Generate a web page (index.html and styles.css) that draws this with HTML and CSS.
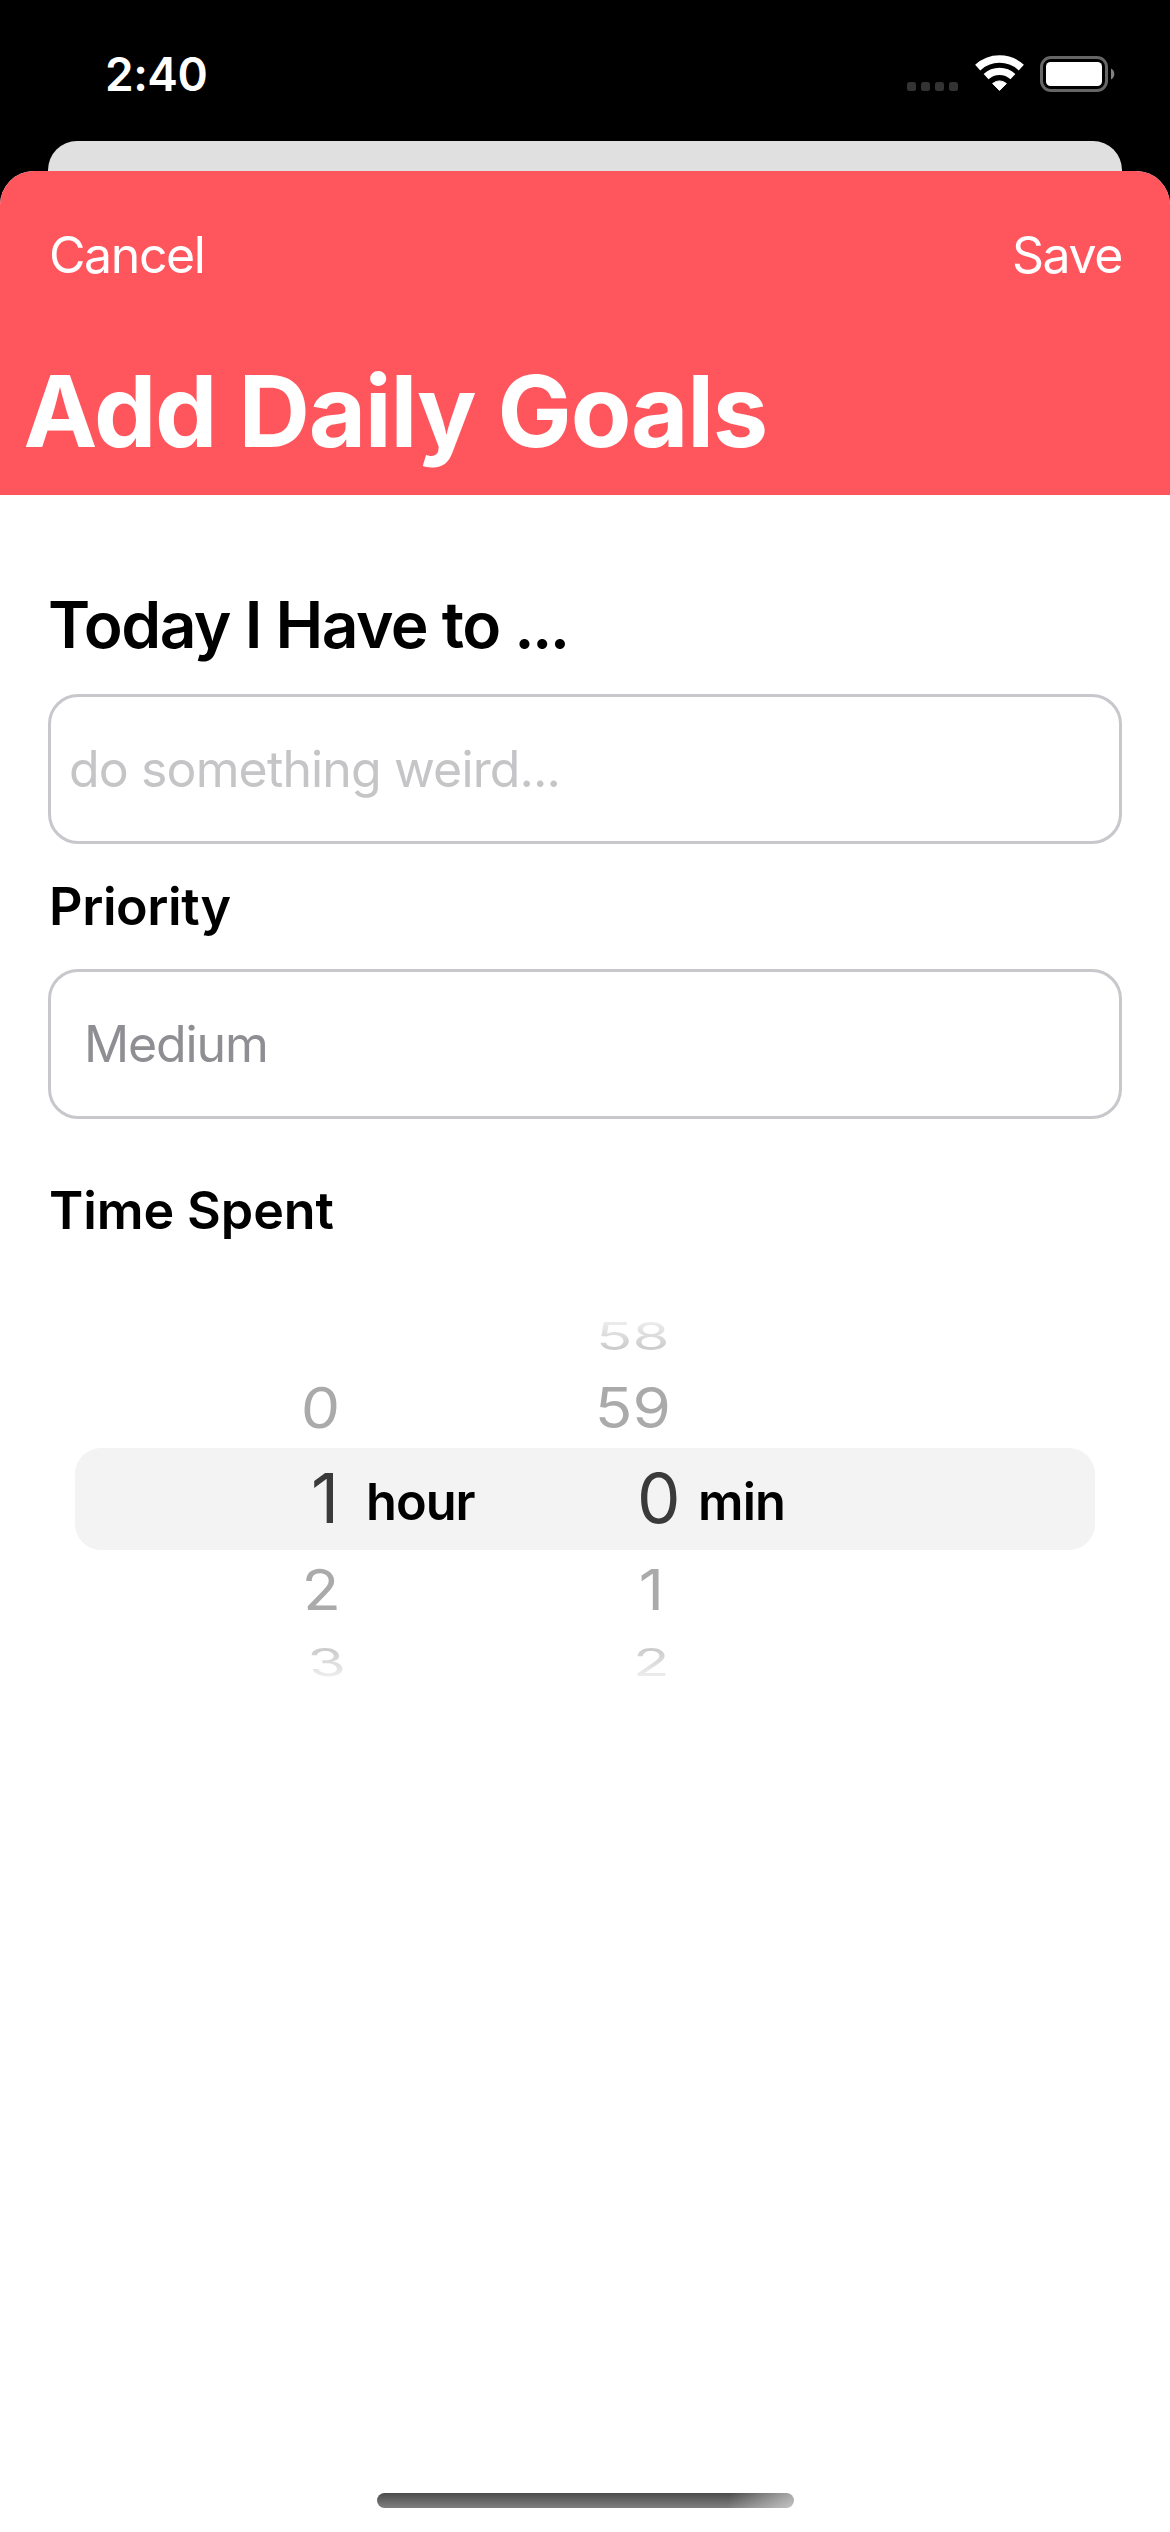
FILE: index.html
```
<!DOCTYPE html>
<html lang="en">
<head>
<meta charset="utf-8">
<title>Add Daily Goals</title>
<link rel="stylesheet" href="styles.css">
</head>
<body>
<div class="screen">
  <header class="status">
    <span class="clock">2:40</span>
    <div class="indicators">
      <svg class="signal" width="51" height="9" viewBox="0 0 51 9">
        <rect width="9" height="9" rx="2.5"/><rect x="14" width="9" height="9" rx="2.5"/><rect x="28" width="9" height="9" rx="2.5"/><rect x="42" width="9" height="9" rx="2.5"/>
      </svg>
      <svg class="wifi" width="49" height="36" viewBox="0 0 49 36">
        <path class="arc" d="M2.7 12.6A32 32 0 0 1 46.3 12.6" stroke-width="7.6"/>
        <path class="arc" d="M11.1 21.6A19.7 19.7 0 0 1 37.9 21.6" stroke-width="7.2"/>
        <path class="dot" d="M24.5 35.4L17.6 28.5Q24.5 23.3 31.4 28.5Z"/>
      </svg>
      <svg class="battery" width="76" height="36" viewBox="0 0 76 36">
        <rect class="shell" x="1.5" y="1.5" width="65" height="33" rx="9.5"/>
        <rect class="charge" x="6" y="6" width="56" height="24" rx="4.5"/>
        <path class="nub" d="M71 12.5A6.2 6.2 0 0 1 71 23.5Z"/>
      </svg>
    </div>
  </header>
  <div class="back-card"></div>
  <main class="sheet">
    <div class="header">
      <nav class="nav"><span class="action">Cancel</span><span class="action">Save</span></nav>
      <h1 class="title">Add Daily Goals</h1>
    </div>
    <section class="form">
      <h2 class="question">Today I Have to <span class="dots">...</span></h2>
      <div class="field placeholder">do something weird...</div>
      <h3 class="label priority">Priority</h3>
      <div class="field value">Medium</div>
      <h3 class="label time">Time Spent</h3>
      <div class="picker">
        <div class="band"></div>
        <div class="wheel hours">
          <span></span>
          <span class="near above">0</span>
          <span class="current">1</span>
          <span class="near below">2</span>
          <span class="far below">3</span>
        </div>
        <span class="unit">hour</span>
        <div class="wheel minutes">
          <span class="far above">58</span>
          <span class="near above">59</span>
          <span class="current">0</span>
          <span class="near below">1</span>
          <span class="far below">2</span>
        </div>
        <span class="unit min">min</span>
      </div>
    </section>
    <div class="home-bar"></div>
  </main>
</div>
</body>
</html>
```
FILE: styles.css
```
* { box-sizing: border-box; }
body { margin: 0; background: #000; font-family: Inter, "Liberation Sans", sans-serif; }
h1, h2, h3 { margin: 0; }
.screen { width: 1170px; height: 2532px; display: flex; flex-direction: column; overflow: hidden; background: #000; }

.status { height: 141px; padding: 0 54px 0 105px; display: flex; justify-content: space-between; }
.clock { color: #fff; font-size: 46px; font-weight: 600; line-height: 149px; letter-spacing: -0.5px; }
.indicators { display: flex; align-items: flex-start; padding-top: 55px; }
.signal { margin: 27px 17px 0 0; fill: #333; }
.wifi { margin-right: 16px; }
.arc { fill: none; stroke: #fff; }
.dot { fill: #fff; stroke: #fff; stroke-width: 1; stroke-linejoin: round; }
.battery { margin-top: 1px; }
.shell { fill: none; stroke: #666; stroke-width: 3; }
.charge { fill: #fff; }
.nub { fill: #808080; }

.back-card { height: 30px; margin: 0 48px; background: #e0e0e0; border-radius: 29px 29px 0 0; }
.sheet { flex: 1; display: flex; flex-direction: column; background: #fff; border-radius: 34px 34px 0 0; overflow: hidden; }
.header { height: 324px; background: #ff565e; color: #fff; }
.nav { height: 168px; padding: 0 48px 0 49px; display: flex; justify-content: space-between; }
.action { font-size: 50px; line-height: 168px; letter-spacing: -1.4px; }
.title { padding-left: 23.5px; font-size: 99px; font-weight: 700; line-height: 144px; letter-spacing: -1.25px; }

.form { flex: 1; padding: 90px 48px 0; }
.question { font-size: 64px; font-weight: 600; line-height: 80px; letter-spacing: -1.5px; }
.dots { letter-spacing: -2.7px; }
.field { height: 150px; border: 3px solid #c7c7cc; border-radius: 30px; font-size: 50px; line-height: 144px; }
.placeholder { margin-top: 29px; padding-left: 18px; color: #c5c5c7; letter-spacing: -0.87px; }
.value { padding-left: 33px; color: #8e8e93; letter-spacing: -1.12px; }
.label { font-size: 52px; font-weight: 600; }
.priority { padding-left: 1px; line-height: 125px; letter-spacing: -0.4px; }
.time { margin-top: 60px; padding-left: 1px; line-height: 64px; letter-spacing: -0.1px; }

.picker { margin: 57px 27px 0; display: grid; grid-template-columns: 291px 223px 104px 1fr; grid-template-rows: 72px 72px 110px 71px 74px; }
.band { grid-area: 3 / 1 / 4 / 5; align-self: center; height: 102px; border-radius: 26px; background: #f3f3f3; }
.wheel { grid-row: 1 / 6; display: grid; grid-template-rows: subgrid; justify-items: end; align-items: center; white-space: nowrap; }
.hours { grid-column: 1; }
.minutes { grid-column: 2 / 4; }
.current { font-size: 69px; line-height: 108px; color: #3a3a3a; padding-bottom: 2px; }
.near { font-size: 62px; line-height: 72px; color: #aaa; }
.far { font-size: 60px; line-height: 72px; color: transparent; background-clip: text; -webkit-background-clip: text; }
.far.above { background-image: linear-gradient(#ebebeb 16px, #cacaca 58px); }
.far.below { background-image: linear-gradient(#cacaca 14px, #ebebeb 56px); }
.hours .above { transform: scaleY(.9) skewX(-3deg); }
.hours .below { transform: scaleY(.9) skewX(3deg); }
.hours .far { transform: scaleY(.635) skewX(5deg); }
.hours .current { margin-right: 27px; }
.hours .near { margin-right: 26px; }
.hours .far { margin-right: 21px; }
.minutes .near { transform: scaleY(.9); }
.minutes .far { transform: scaleY(.635); }
.minutes .current { margin-right: 12.5px; }
.minutes .near { margin-right: 22px; }
.minutes .near.below { margin-right: 29px; }
.minutes .far { margin-right: 23.5px; }
.unit { grid-area: 3 / 2; padding-top: 2px; font-size: 50.5px; font-weight: 600; line-height: 112px; letter-spacing: -1px; }
.unit.min { grid-area: 3 / 4; padding-left: 5px; letter-spacing: -0.8px; }
.picker .unit { margin-bottom: -4px; }

.home-bar { width: 417px; height: 15px; margin: 0 auto 24px 377px; border-radius: 8px; background: linear-gradient(100deg, rgba(255,255,255,0) 84%, rgba(255,255,255,.5) 99%), linear-gradient(#4c4c4c, #808080); }
```
